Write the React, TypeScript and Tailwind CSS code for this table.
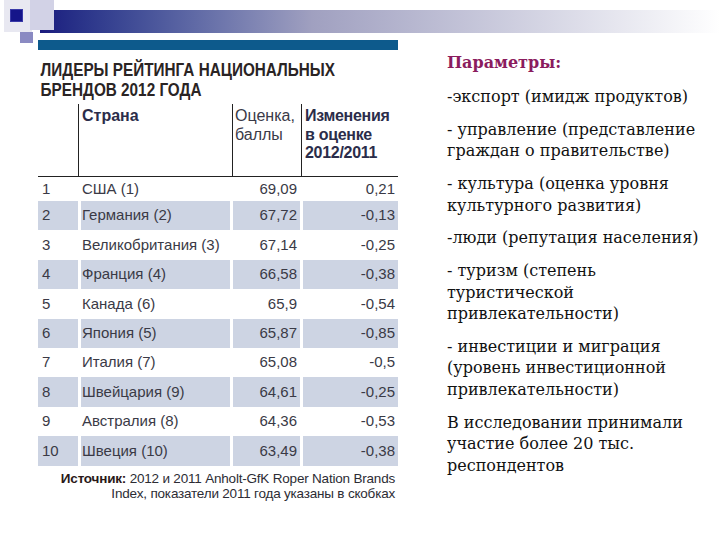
import React from "react";

type Row = { n: number; country: string; score: string; change: string };

const ROWS: Row[] = [
  { n: 1, country: "США (1)", score: "69,09", change: "0,21" },
  { n: 2, country: "Германия (2)", score: "67,72", change: "-0,13" },
  { n: 3, country: "Великобритания (3)", score: "67,14", change: "-0,25" },
  { n: 4, country: "Франция (4)", score: "66,58", change: "-0,38" },
  { n: 5, country: "Канада (6)", score: "65,9", change: "-0,54" },
  { n: 6, country: "Япония (5)", score: "65,87", change: "-0,85" },
  { n: 7, country: "Италия (7)", score: "65,08", change: "-0,5" },
  { n: 8, country: "Швейцария (9)", score: "64,61", change: "-0,25" },
  { n: 9, country: "Австралия (8)", score: "64,36", change: "-0,53" },
  { n: 10, country: "Швеция (10)", score: "63,49", change: "-0,38" },
];

const PARAMS: string[][] = [
  ["-экспорт (имидж продуктов)"],
  ["- управление (представление", "граждан о правительстве)"],
  ["- культура (оценка уровня", "культурного развития)"],
  ["-люди (репутация населения)"],
  ["- туризм (степень", "туристической", "привлекательности)"],
  ["- инвестиции и миграция", "(уровень инвестиционной", "привлекательности)"],
  ["В исследовании принимали", "участие более 20 тыс.", "респондентов"],
];

function RatingTable() {
  return (
    <div className="font-['Liberation_Sans',Arial,sans-serif] text-[#3a3a46]">
      <div className="flex h-[73px] border-b border-[#222]">
        <div className="w-[41px] border-r border-[#222]" />
        <div className="w-[154px] border-r border-[#222] pl-[3px] pt-[3px] text-[16px] font-bold leading-[18.5px] text-[#2b2d4a]">
          Страна
        </div>
        <div className="w-[69px] border-r border-[#222] pl-[2px] pt-[3px] text-[16px] leading-[18.5px] text-[#3a3a48]">
          Оценка,
          <br />
          баллы
        </div>
        <div className="w-[95px] pl-[3px] pt-[3px] text-[16px] font-bold leading-[18.5px] tracking-[-0.3px] text-[#2b2d4a]">
          Изменения
          <br />в оценке
          <br />
          2012/2011
        </div>
      </div>
      {ROWS.map((r) => {
        const shaded = r.n % 2 === 0;
        const cell = shaded ? "bg-[#cdd4e3]" : "";
        return (
          <div
            key={r.n}
            className={`flex gap-[3px] text-[15px] ${r.n === 1 ? "h-[24px]" : "h-[29.4px]"}`}
          >
            <div className={`flex w-[40px] items-center pl-[4px] ${cell}`}>{r.n}</div>
            <div className={`flex w-[149px] items-center pl-[1px] ${cell}`}>{r.country}</div>
            <div className={`flex w-[67px] items-center justify-end pr-[3px] ${cell}`}>{r.score}</div>
            <div className={`flex w-[95px] items-center justify-end pr-[3px] ${cell}`}>{r.change}</div>
          </div>
        );
      })}
      <p className="mt-[5px] pr-[3px] text-right text-[13.5px] leading-[15px] tracking-[-0.2px] text-[#2c2c34]">
        <span className="font-bold text-[#2a1818]">Источник:</span> 2012 и 2011 Anholt-GfK Roper Nation Brands
        <br />
        Index, показатели 2011 года указаны в скобках
      </p>
    </div>
  );
}

export default function App() {
  return (
    <div className="relative h-[540px] w-[720px] overflow-hidden bg-white">
      {/* corner decoration */}
      <div className="absolute left-[4px] top-0 h-[32px] w-[28px] bg-[#e8e8f1]" />
      <div className="absolute left-[30px] top-0 h-[30px] w-[24px] bg-[#d2d2e6]" />
      <div className="absolute left-[20px] top-[32px] h-[11px] w-[13px] bg-[#8a8ac2]" />

      <div className="ml-[40px] mt-[10px] h-[23px] w-[680px] bg-gradient-to-r from-[#1b1b7e] via-[#a0a0c0] via-40% to-white" />
      <div className="absolute left-[10px] top-[9px] h-[13px] w-[13px] border border-[#3a3aa8] bg-[#15158a]" />

      <div className="mt-[7px] flex">
        <div className="ml-[38px] w-[360px]">
          <div className="h-[10px] bg-[#0d5a8c]" />
          <h1 className="mt-[11px] origin-left scale-x-[0.85] whitespace-nowrap pl-[3px] font-['Liberation_Sans',Arial,sans-serif] text-[18px] font-bold leading-[19.5px] text-[#2a2424]">
            ЛИДЕРЫ РЕЙТИНГА НАЦИОНАЛЬНЫХ
            <br />
            БРЕНДОВ 2012 ГОДА
          </h1>
          <div className="mt-[4px]">
            <RatingTable />
          </div>
        </div>

        <div className="ml-[49px] pt-[12px] font-['DejaVu_Serif',serif] text-[16px] leading-[21.5px] text-[#111]">
          <p className="font-bold text-[#8b1c5e]">Параметры:</p>
          {PARAMS.map((lines, i) => (
            <p key={i} className={`whitespace-nowrap ${i === 0 ? "mt-[12.5px]" : "mt-[11.3px]"}`}>
              {lines.map((l, j) => (
                <React.Fragment key={j}>
                  {j > 0 && <br />}
                  {l}
                </React.Fragment>
              ))}
            </p>
          ))}
        </div>
      </div>
    </div>
  );
}
